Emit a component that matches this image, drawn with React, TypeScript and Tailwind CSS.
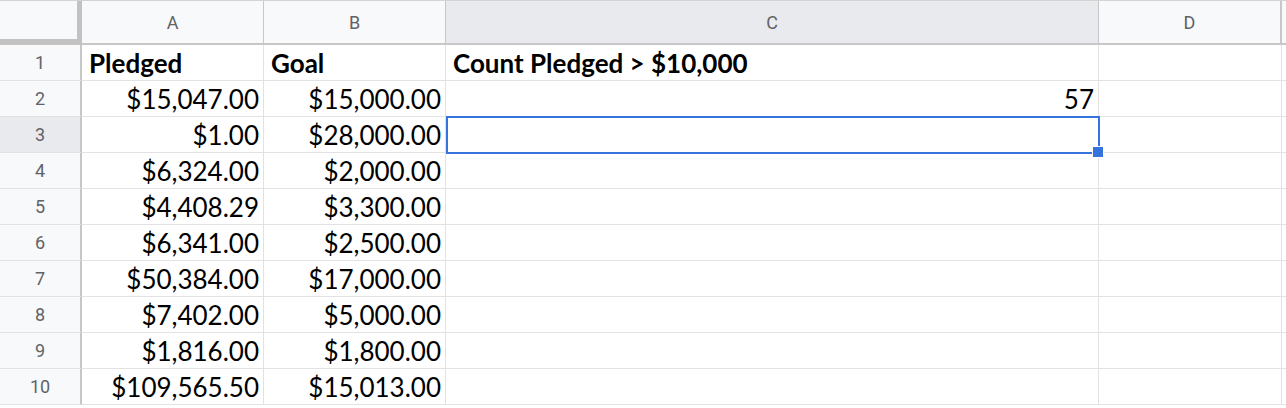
import React from "react";

const cols = [
  { key: "A", w: "w-[182px]" },
  { key: "B", w: "w-[182px]" },
  { key: "C", w: "w-[653px]" },
  { key: "D", w: "w-[183px]" },
];

const rows: string[][] = [
  ["Pledged", "Goal", "Count Pledged > $10,000", ""],
  ["$15,047.00", "$15,000.00", "57", ""],
  ["$1.00", "$28,000.00", "", ""],
  ["$6,324.00", "$2,000.00", "", ""],
  ["$4,408.29", "$3,300.00", "", ""],
  ["$6,341.00", "$2,500.00", "", ""],
  ["$50,384.00", "$17,000.00", "", ""],
  ["$7,402.00", "$5,000.00", "", ""],
  ["$1,816.00", "$1,800.00", "", ""],
  ["$109,565.50", "$15,013.00", "", ""],
];

function HeaderRow() {
  return (
    <div className="flex h-[45px] border-t border-[#d3d3d3]">
      <div className="w-[82px] shrink-0 border-r-[5px] border-b-[6px] border-[#c2c2c2] bg-[#f8f9fa]" />
      {cols.map((c) => (
        <div
          key={c.key}
          className={`${c.w} shrink-0 flex items-center justify-center border-r border-b-2 border-[#c7c7c7] text-[18px] text-[#5f6368] ${
            c.key === "C" ? "bg-[#e8eaed]" : "bg-[#f8f9fa]"
          } ${c.key === "D" ? "border-r-2" : ""}`}
        >
          {c.key}
        </div>
      ))}
      <div className="flex-1 bg-[#f8f9fa] border-b-2 border-[#c7c7c7]" />
    </div>
  );
}

export default function App() {
  return (
    <div
      className="relative w-[1286px] h-[408px] overflow-hidden bg-white"
      style={{ fontFamily: "Roboto, 'Liberation Sans', sans-serif" }}
    >
      <HeaderRow />
      {rows.map((r, i) => (
        <div key={i} className="flex h-[36px]">
          <div
            className={`w-[82px] shrink-0 flex items-center justify-center border-r-2 border-b border-r-[#c7c7c7] border-b-[#e2e2e3] text-[18px] text-[#5f6368] ${
              i === 2 ? "bg-[#e8eaed]" : "bg-[#f8f9fa]"
            }`}
          >
            {i + 1}
          </div>
          {cols.map((c, j) => {
            const v = r[j];
            const isNum = i > 0;
            return (
              <div
                key={c.key}
                className={`${c.w} shrink-0 flex items-end border-r border-b border-[#e2e2e3] pb-[1px] text-[26px] leading-[32px] text-black ${
                  isNum ? "justify-end pr-[4px]" : "justify-start pl-[7px] font-bold"
                }`}
                style={{ fontFamily: "Lato, 'Noto Sans', sans-serif" }}
              >
                {v}
              </div>
            );
          })}
          <div className="flex-1 border-b border-[#e2e2e3]" />
        </div>
      ))}

      {/* selection on C3 */}
      <div className="absolute left-[446px] top-[116px] w-[654px] h-[38px] border-2 border-[#3574dc]" />
      <div className="absolute left-[1092px] top-[146px] w-[12px] h-[12px] bg-[#3574dc] border border-white" />
    </div>
  );
}
